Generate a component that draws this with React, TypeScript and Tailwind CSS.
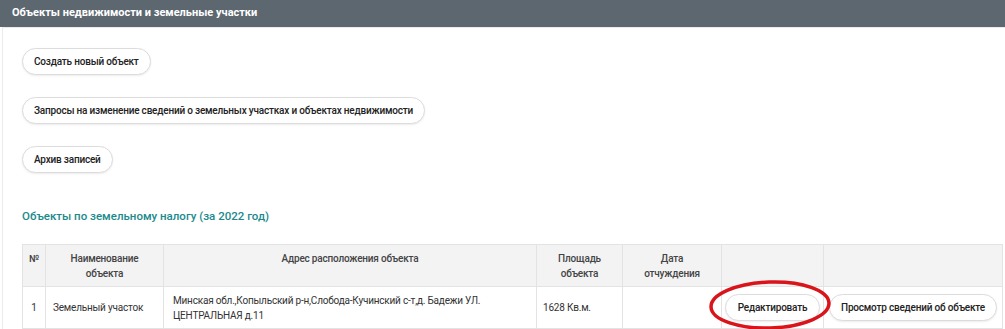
import React from 'react'

const font = { fontFamily: 'Roboto, "Noto Sans", Arial, sans-serif' }

function PillButton({ children, className = '' }: { children: React.ReactNode; className?: string }) {
  return (
    <button
      type="button"
      className={`h-[27px] whitespace-nowrap rounded-full border border-[#dcdcdc] bg-white px-[11px] text-[10px] font-medium tracking-[-0.2px] text-[#222] shadow-[0_1px_2px_rgba(0,0,0,0.08)] ${className}`}
    >
      {children}
    </button>
  )
}

export default function App() {
  return (
    <div style={font} className="relative h-[329px] w-[1005px] overflow-hidden bg-white">
      <div className="flex h-[27px] items-center bg-[#5c6770] pl-[12px] text-[11px] font-bold text-white">
        Объекты недвижимости и земельные участки
      </div>
      <div className="ml-[2px] flex flex-col items-start border-l border-t border-[#e8ecee] pl-[19px] pt-[20px]">
        <PillButton>Создать новый объект</PillButton>
        <PillButton className="mt-[22px]">
          Запросы на изменение сведений о земельных участках и объектах недвижимости
        </PillButton>
        <PillButton className="mt-[22px]">Архив записей</PillButton>

        <h2 className="mt-[35px] text-[11.5px] font-medium text-[#1b8a8c]">
          Объекты по земельному налогу (за 2022 год)
        </h2>

        <table className="mt-[19px] w-[980px] table-fixed border-collapse text-[10px] tracking-[-0.2px] text-[#333]">
          <colgroup>
            <col className="w-[23px]" />
            <col className="w-[118px]" />
            <col className="w-[373px]" />
            <col className="w-[86px]" />
            <col className="w-[99px]" />
            <col className="w-[102px]" />
            <col className="w-[179px]" />
          </colgroup>
          <thead>
            <tr className="h-[42px] bg-[#f3f3f4] leading-[15px] text-[#444]">
              <th className="border border-[#e3e3e3] pb-[14px] text-center font-medium">№</th>
              <th className="border border-[#e3e3e3] text-center font-medium">
                Наименование
                <br />
                объекта
              </th>
              <th className="border border-[#e3e3e3] pb-[14px] text-center font-medium">
                Адрес расположения объекта
              </th>
              <th className="border border-[#e3e3e3] text-center font-medium">
                Площадь
                <br />
                объекта
              </th>
              <th className="border border-[#e3e3e3] text-center font-medium">
                Дата
                <br />
                отчуждения
              </th>
              <th className="border border-[#e3e3e3]" />
              <th className="border border-[#e3e3e3]" />
            </tr>
          </thead>
          <tbody>
            <tr className="h-[42px] leading-[15px]">
              <td className="border border-[#e3e3e3] text-center">1</td>
              <td className="border border-[#e3e3e3] pl-[7px]">Земельный участок</td>
              <td className="border border-[#e3e3e3] pl-[9px]">
                Минская обл.,Копыльский р-н,Слобода-Кучинский с-т,д. Бадежи УЛ.
                <br />
                ЦЕНТРАЛЬНАЯ д.11
              </td>
              <td className="border border-[#e3e3e3] pl-[6px]">1628 Кв.м.</td>
              <td className="border border-[#e3e3e3]" />
              <td className="border border-[#e3e3e3] text-center">
                <PillButton className="px-[12px]">Редактировать</PillButton>
              </td>
              <td className="border border-[#e3e3e3] pl-[5px]">
                <PillButton>Просмотр сведений об объекте</PillButton>
              </td>
            </tr>
          </tbody>
        </table>
      </div>

      <svg className="pointer-events-none absolute left-[705px] top-[276px]" width="130" height="60" viewBox="0 0 130 60">
        <ellipse cx="65" cy="29" rx="59" ry="23" fill="none" stroke="#d9141b" strokeWidth="3.5" transform="rotate(-2 65 29)" />
      </svg>
    </div>
  )
}
